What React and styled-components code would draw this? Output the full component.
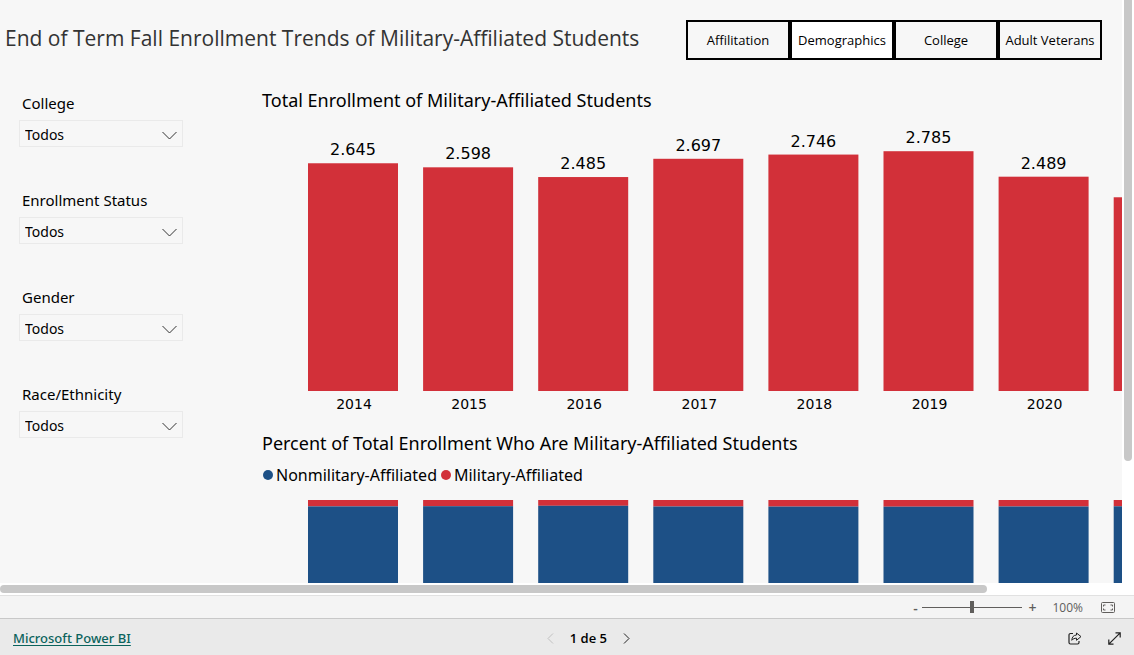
import React, { useState } from "react";
import styled, { createGlobalStyle } from "styled-components";

const GlobalStyle = createGlobalStyle`
  * {
    box-sizing: border-box;
  }

  body {
    margin: 0;
    background: #fff;
    color: #000;
    font-family: "Noto Sans", "Open Sans", sans-serif;
  }
`;

const Page = styled.div`
  display: flex;
  flex-direction: column;
  height: 100vh;
  overflow: hidden;
`;

const ScrollArea = styled.div`
  flex: 1;
  min-height: 0;
  display: grid;
  grid-template-columns: minmax(0, 1fr) 12px;
  grid-template-rows: minmax(0, 1fr) 12px;
`;

const Report = styled.main`
  background: #f7f7f7;
  overflow: hidden;
`;

const VerticalTrack = styled.div`
  padding: 0 2px;
`;

const VerticalThumb = styled.div`
  width: 8px;
  height: 79%;
  border-radius: 0 0 4px 4px;
  background: #c8c8c8;
`;

const HorizontalTrack = styled.div`
  padding: 2px 0;
`;

const HorizontalThumb = styled.div`
  width: 88%;
  height: 8px;
  border-radius: 4px;
  background: #c8c8c8;
`;

const Header = styled.header`
  display: flex;
  align-items: flex-start;
  justify-content: space-between;
  padding: 20px 20px 0 5px;
`;

const Title = styled.h1`
  margin: 0;
  color: #333;
  font-family: "Open Sans", sans-serif;
  font-size: 21px;
  line-height: 36px;
  font-weight: 400;
  white-space: nowrap;
`;

const Nav = styled.nav`
  display: flex;
`;

const NavButton = styled.button`
  width: 104px;
  height: 40px;
  padding: 0;
  border: 2px solid #000;
  background: ${(props) => (props.$active ? "#fff" : "#f7f7f7")};
  color: #000;
  font-family: "Open Sans", sans-serif;
  font-size: 13px;
  white-space: nowrap;
`;

const Body = styled.div`
  display: grid;
  grid-template-columns: 262px minmax(0, 1fr);
`;

const Filters = styled.aside`
  display: flex;
  flex-direction: column;
  gap: 43px;
  padding: 33px 0 0 19px;
`;

const Filter = styled.div`
  width: 164px;
`;

const FilterLabel = styled.label`
  display: block;
  padding: 0 3px 7px;
  font-size: 15px;
  line-height: 20px;
`;

const SelectBox = styled.div`
  display: grid;
  align-items: center;

  > * {
    grid-area: 1 / 1;
  }

  svg {
    justify-self: end;
    margin: 3px 6px 0 0;
    pointer-events: none;
  }
`;

const Select = styled.select`
  appearance: none;
  width: 100%;
  height: 27px;
  padding: 2px 24px 0 5px;
  border: 1px solid #eaeaea;
  border-radius: 0;
  background: transparent;
  color: #000;
  font-family: inherit;
  font-size: 14px;
`;

const ChartTitle = styled.h2`
  margin: 0;
  font-size: 18px;
  line-height: 24px;
  font-weight: 400;
  white-space: nowrap;
`;

const Charts = styled.div`
  padding-top: 28px;
`;

const Chart = styled.svg`
  display: block;
  font-family: "DejaVu Sans", sans-serif;
  font-size: 16px;
`;

const Legend = styled.ul`
  display: flex;
  gap: 4px;
  margin: 0;
  padding: 8px 0 13px 1px;
  list-style: none;
`;

const LegendItem = styled.li`
  display: flex;
  align-items: center;
  gap: 3px;
  font-size: 16px;
  line-height: 24px;

  &::before {
    content: "";
    width: 10px;
    height: 10px;
    border-radius: 50%;
    background: ${(props) => props.$color};
  }
`;

const ZoomBar = styled.div`
  display: flex;
  align-items: center;
  justify-content: flex-end;
  height: 23px;
  padding-right: 19px;
  border-top: 1px solid #e1e1e1;
  background: #f4f4f4;
  color: #605e5c;
  font-family: "Open Sans", sans-serif;
  font-size: 12px;
`;

const ZoomButton = styled.button`
  display: flex;
  align-items: center;
  justify-content: center;
  width: 14px;
  height: 20px;
  padding: 0;
  border: 0;
  background: none;
  color: inherit;
  font-family: inherit;
  font-size: 14px;
  font-weight: 600;
`;

const ZoomSlider = styled.input`
  appearance: none;
  width: 100px;
  height: 12px;
  margin: 0 3px 0 0;
  background: linear-gradient(#605e5c, #605e5c) center / 100% 1px no-repeat;

  &::-webkit-slider-thumb {
    appearance: none;
    width: 4px;
    height: 12px;
    background: #605e5c;
  }
`;

const ZoomValue = styled.output`
  padding: 0 18px 0 13px;
`;

const Footer = styled.footer`
  display: grid;
  grid-template-columns: 100fr auto 92fr;
  align-items: center;
  height: 37px;
  padding: 2px 13px 0;
  border-top: 1px solid #c8c8c8;
  background: #eaeaea;
`;

const BrandLink = styled.a`
  justify-self: start;
  color: #0b635c;
  font-size: 13px;
  font-weight: 500;
  text-underline-offset: 2px;
`;

const Pager = styled.div`
  display: flex;
  align-items: center;
  gap: 16px;
  font-family: "Open Sans", sans-serif;
  font-size: 13px;
  font-weight: 600;
`;

const IconButton = styled.button`
  display: flex;
  align-items: center;
  justify-content: center;
  height: 20px;
  padding: 0;
  border: 0;
  background: none;
  color: ${(props) => (props.disabled ? "#c0c0c0" : "#222")};
`;

const Actions = styled.div`
  display: flex;
  justify-content: flex-end;
  gap: 26px;
`;

const RED = "#d23039";
const BLUE = "#1d5086";

const FILTERS = ["College", "Enrollment Status", "Gender", "Race/Ethnicity"];
const PAGES = ["Affilitation", "Demographics", "College", "Adult Veterans"];

// a preliminary year is drawn without its labels
const DATA = [
  { year: 2014, total: 2645, percent: 6.4 },
  { year: 2015, total: 2598, percent: 6.2 },
  { year: 2016, total: 2485, percent: 5.8 },
  { year: 2017, total: 2697, percent: 6.5 },
  { year: 2018, total: 2746, percent: 6.6 },
  { year: 2019, total: 2785, percent: 6.7 },
  { year: 2020, total: 2489, percent: 6.5 },
  { year: 2021, total: 2250, percent: 6.3, preliminary: true },
];

const BAR_WIDTH = 90;
const barX = (i) => 46 + i * 115.1;

const TotalChart = () => (
  <Chart width="100%" height="319" role="img" aria-label="Total enrollment">
    {DATA.map(({ year, total, preliminary }, i) => {
      const height = total * 0.0861;
      const center = barX(i) + BAR_WIDTH / 2;
      return (
        <g key={year}>
          <rect
            x={barX(i)}
            y={279 - height}
            width={BAR_WIDTH}
            height={height}
            fill={RED}
          />
          {!preliminary && (
            <>
              <text x={center} y={271 - height} textAnchor="middle">
                {total.toLocaleString("de-DE")}
              </text>
              <text x={center + 1} y="297" fontSize="14" textAnchor="middle">
                {year}
              </text>
            </>
          )}
        </g>
      );
    })}
  </Chart>
);

const PercentChart = () => (
  <Chart width="100%" height="100" role="img" aria-label="Percent of total">
    {DATA.map(({ year, percent }, i) => (
      <g key={year}>
        <rect x={barX(i)} width={BAR_WIDTH} height={percent} fill={RED} />
        <rect
          x={barX(i)}
          y={percent}
          width={BAR_WIDTH}
          height={100 - percent}
          fill={BLUE}
        />
      </g>
    ))}
  </Chart>
);

const SlicerFilter = ({ name }) => {
  const id = name.toLowerCase().replace(/\W/g, "-");
  return (
    <Filter>
      <FilterLabel htmlFor={id}>{name}</FilterLabel>
      <SelectBox>
        <Select id={id}>
          <option>Todos</option>
        </Select>
        <svg width="15" height="9" viewBox="0 0 15 9" fill="none">
          <path d="M.5 1l7 7 7-7" stroke="#333" />
        </svg>
      </SelectBox>
    </Filter>
  );
};

const App = () => {
  const [zoom, setZoom] = useState(100);

  return (
    <Page>
      <GlobalStyle />
      <ScrollArea>
        <Report>
          <Header>
            <Title>
              End of Term Fall Enrollment Trends of Military-Affiliated Students
            </Title>
            <Nav>
              {PAGES.map((page) => (
                <NavButton key={page} $active={page === "Demographics"}>
                  {page}
                </NavButton>
              ))}
            </Nav>
          </Header>
          <Body>
            <Filters>
              {FILTERS.map((name) => (
                <SlicerFilter key={name} name={name} />
              ))}
            </Filters>
            <Charts>
              <ChartTitle>
                Total Enrollment of Military-Affiliated Students
              </ChartTitle>
              <TotalChart />
              <ChartTitle>
                Percent of Total Enrollment Who Are Military-Affiliated Students
              </ChartTitle>
              <Legend>
                <LegendItem $color={BLUE}>Nonmilitary-Affiliated</LegendItem>
                <LegendItem $color={RED}>Military-Affiliated</LegendItem>
              </Legend>
              <PercentChart />
            </Charts>
          </Body>
        </Report>
        <VerticalTrack>
          <VerticalThumb />
        </VerticalTrack>
        <HorizontalTrack>
          <HorizontalThumb />
        </HorizontalTrack>
      </ScrollArea>
      <ZoomBar>
        <ZoomButton aria-label="Zoom out" onClick={() => setZoom(zoom - 10)}>
          -
        </ZoomButton>
        <ZoomSlider
          type="range"
          aria-label="Zoom"
          min="0"
          max="200"
          value={zoom}
          onChange={(e) => setZoom(Number(e.target.value))}
        />
        <ZoomButton aria-label="Zoom in" onClick={() => setZoom(zoom + 10)}>
          +
        </ZoomButton>
        <ZoomValue>{zoom}%</ZoomValue>
        <ZoomButton aria-label="Fit to page">
          <svg width="14" height="11" viewBox="0 0 14 11" fill="none">
            <rect x=".5" y=".5" width="13" height="10" rx="1" stroke="#605e5c" />
            <path
              d="M4.500 3h-2v1.500M2.500 6.500V8h2M9.500 3h2v1.500M11.500 6.500V8h-2"
              stroke="#605e5c"
            />
          </svg>
        </ZoomButton>
      </ZoomBar>
      <Footer>
        <BrandLink href="#powerbi">Microsoft Power BI</BrandLink>
        <Pager>
          <IconButton disabled aria-label="Previous page">
            <svg width="7" height="11" viewBox="0 0 7 11" fill="none">
              <path d="M6 .5l-5 5 5 5" stroke="currentColor" />
            </svg>
          </IconButton>
          <span>1 de 5</span>
          <IconButton aria-label="Next page">
            <svg width="7" height="11" viewBox="0 0 7 11" fill="none">
              <path d="M1 .5l5 5-5 5" stroke="currentColor" />
            </svg>
          </IconButton>
        </Pager>
        <Actions>
          <IconButton aria-label="Share">
            <svg width="14" height="13" viewBox="0 0 14 13" fill="none">
              <path
                d="M5 1.500H2.500A1.500 1.500 0 0 0 1 3v7.500A1.500 1.500 0 0 0 2.500 12h7a1.500 1.500 0 0 0 1.500-1.500V9"
                stroke="currentColor"
                strokeWidth="1.2"
              />
              <path
                d="M8.500 1v2C5.500 3.200 4 5 3.800 8.300 5 6.800 6.500 6.200 8.500 6.200v2.100L13 4.600z"
                stroke="currentColor"
                strokeLinejoin="round"
              />
            </svg>
          </IconButton>
          <IconButton aria-label="Full screen">
            <svg width="13" height="13" viewBox="0 0 13 13" fill="none">
              <path
                d="M.8 12.200L12.200.8M7.500.8h4.700v4.700M.8 7.500v4.700h4.700"
                stroke="currentColor"
                strokeWidth="1.2"
              />
            </svg>
          </IconButton>
        </Actions>
      </Footer>
    </Page>
  );
};

export default App;
